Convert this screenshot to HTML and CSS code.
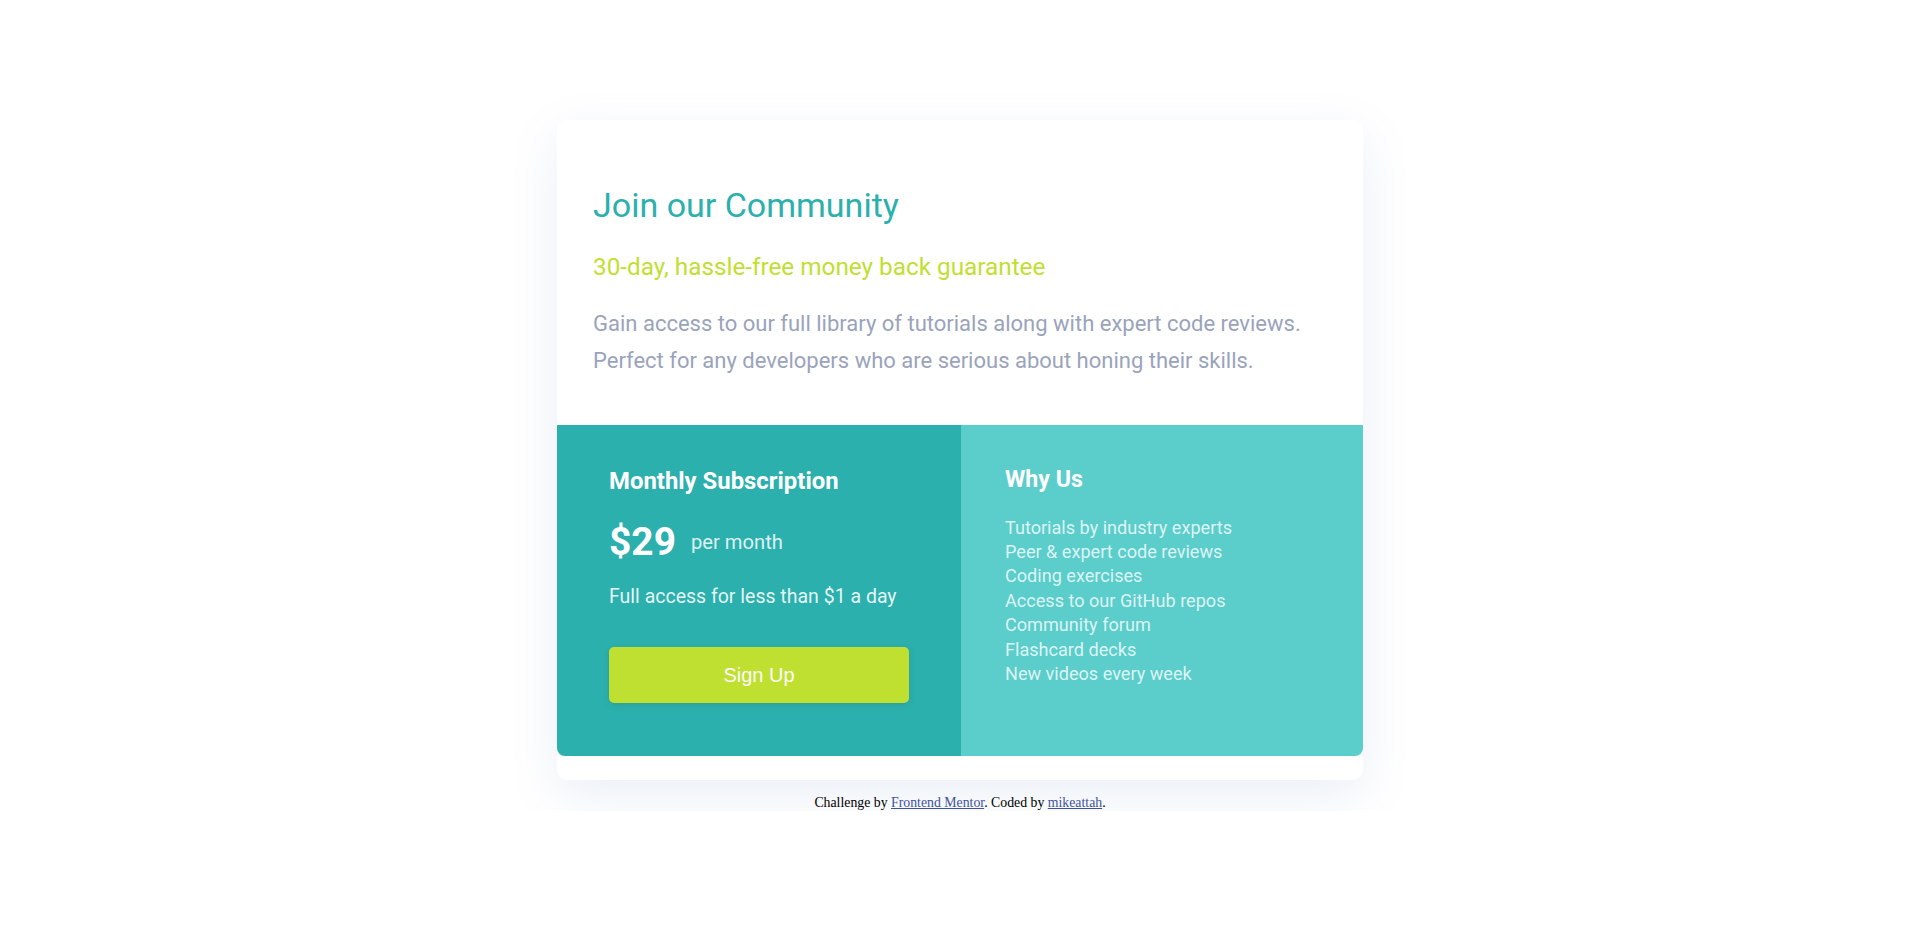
FILE: index.html
```html
<!DOCTYPE html>
<html lang="en">
<head>
<meta charset="utf-8">
<title>Single Price Grid</title>
<link rel="stylesheet" href="styles.css">
</head>
<body>
<main class="card">
  <section class="intro">
    <h1 class="intro-title">Join our Community</h1>
    <h2 class="intro-sub">30-day, hassle-free money back guarantee</h2>
    <p class="intro-text">Gain access to our full library of tutorials along with expert code reviews.<br>Perfect for any developers who are serious about honing their skills.</p>
  </section>
  <section class="plans">
    <div class="plan">
      <h3 class="plan-title">Monthly Subscription</h3>
      <div class="price"><span class="price-amount">$29</span><span class="price-period">per month</span></div>
      <p class="plan-note">Full access for less than $1 a day</p>
      <button class="signup">Sign Up</button>
    </div>
    <div class="why">
      <h3 class="why-title">Why Us</h3>
      <ul class="why-list">
        <li>Tutorials by industry experts</li>
        <li>Peer &amp; expert code reviews</li>
        <li>Coding exercises</li>
        <li>Access to our GitHub repos</li>
        <li>Community forum</li>
        <li>Flashcard decks</li>
        <li>New videos every week</li>
      </ul>
    </div>
  </section>
</main>
<footer class="attribution">Challenge by <a href="#">Frontend Mentor</a>. Coded by <a href="#">mikeattah</a>.</footer>
</body>
</html>
```

FILE: styles.css
```css
* { box-sizing: border-box; }
body {
  margin: 0;
  background: #ffffff;
  font-family: Roboto, "Liberation Sans", sans-serif;
}
.card {
  width: 806px;
  margin: 120px auto 0;
  background: #fff;
  border-radius: 10px;
  box-shadow: 0 15px 50px rgba(80, 120, 180, 0.12);
  padding-bottom: 24px;
}
.intro {
  padding: 65px 36px 46px;
}
.intro-title {
  margin: 0;
  font-size: 34px;
  font-weight: 400;
  color: #2bb0ae;
  line-height: 40px;
}
.intro-sub {
  margin: 27px 0 0;
  font-size: 24.3px;
  font-weight: 400;
  color: #bfdf32;
  line-height: 30px;
}
.intro-text {
  margin: 24px 0 0;
  font-size: 22px;
  line-height: 36.5px;
  color: #9aa3bc;
}
.plans {
  display: grid;
  grid-template-columns: 1fr 1fr;
  color: #fff;
}
.plan {
  background: #2bb0ae;
  border-bottom-left-radius: 8px;
  padding: 41px 52px 53px;
}
.why {
  background: #5bcdcb;
  border-bottom-right-radius: 8px;
  padding: 39px 44px;
}
.plan-title {
  margin: 0;
  font-size: 23.9px;
  font-weight: 700;
  line-height: 30px;
}
.why-title {
  margin: 0;
  font-size: 23.2px;
  font-weight: 700;
  line-height: 30px;
}
.price {
  display: flex;
  align-items: center;
  margin-top: 23px;
  height: 46px;
  line-height: 46px;
}
.price-amount {
  font-size: 38.9px;
  font-weight: 700;
}
.price-period {
  margin-left: 15px;
  font-size: 20.2px;
  line-height: 40px;
  color: rgba(255, 255, 255, 0.85);
}
.plan-note {
  margin: 19px 0 0;
  font-size: 19.5px;
  line-height: 26px;
  color: rgba(255, 255, 255, 0.9);
}
.signup {
  display: block;
  width: 300px;
  height: 56px;
  margin-top: 37px;
  padding: 0;
  border: none;
  border-radius: 5px;
  background: #c0e031;
  color: #fafafa;
  font-family: "Liberation Sans", Arial, sans-serif;
  font-size: 20px;
  box-shadow: 0 2px 6px rgba(60, 60, 60, 0.15);
}
.why-list {
  list-style: none;
  margin: 21.6px 0 0;
  padding: 0;
  font-size: 18.1px;
  line-height: 24.4px;
  color: rgba(255, 255, 255, 0.8);
}
.attribution {
  margin-top: 15px;
  text-align: center;
  font-family: "Liberation Serif", serif;
  font-size: 13.8px;
  color: #000;
}
.attribution a { color: #3e52a3; }
```
